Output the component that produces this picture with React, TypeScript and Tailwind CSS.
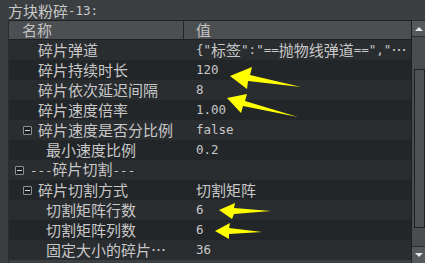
import React from "react";

type Row = {
  level: 0 | 1 | 2;
  name: string;
  value: string;
  toggle?: boolean;
};

const ROWS: Row[] = [
  { level: 1, name: "碎片弹道", value: '{"标签":"==抛物线弹道==","…' },
  { level: 1, name: "碎片持续时长", value: "120" },
  { level: 1, name: "碎片依次延迟间隔", value: "8" },
  { level: 1, name: "碎片速度倍率", value: "1.00" },
  { level: 1, name: "碎片速度是否分比例", value: "false", toggle: true },
  { level: 2, name: "最小速度比例", value: "0.2" },
  { level: 0, name: "---碎片切割---", value: "", toggle: true },
  { level: 1, name: "碎片切割方式", value: "切割矩阵", toggle: true },
  { level: 2, name: "切割矩阵行数", value: "6" },
  { level: 2, name: "切割矩阵列数", value: "6" },
  { level: 2, name: "固定大小的碎片…", value: "36" },
];

const INDENT = ["pl-[6px]", "pl-[14px]", "pl-[22px]"];

// CJK runs get the wide font, everything else the mono one
function Mixed({ text }: { text: string }) {
  const parts = text.split(/([\u2026\u3000-\u9fff\uff00-\uffef]+)/).filter(Boolean);
  return (
    <>
      {parts.map((part, i) =>
        /[\u2026\u3000-\u9fff\uff00-\uffef]/.test(part) ? (
          <span key={i} className="font-['Noto_Sans_CJK_SC',sans-serif] text-[15px]">
            {part}
          </span>
        ) : (
          <span key={i} className="font-['DejaVu_Sans_Mono',monospace] text-[12.5px]">
            {part}
          </span>
        ),
      )}
    </>
  );
}

function Toggle() {
  return (
    <span className="flex h-[9px] w-[9px] items-center justify-center rounded-[1px] border border-[#8d9094] bg-[#1d1f21]">
      <span className="h-px w-[5px] bg-[#d8d8d8]" />
    </span>
  );
}

function Arrows() {
  return (
    <svg
      width="425"
      height="263"
      viewBox="0 0 425 263"
      className="pointer-events-none absolute left-0 top-0"
      aria-hidden
    >
      <g fill="#ffff00">
        <polygon points="230,76 252,67 250,75 301,87 248,81 247,89" />
        <polygon points="227,98 247,94 245,101 298,117 243,106 241,113" />
        <polygon points="219,210 235,203 234,208 271,211 234,214 232,219" />
        <polygon points="215,231 230,223 229,228 262,232 229,234 229,239" />
      </g>
    </svg>
  );
}

export default function App() {
  return (
    <div className="relative h-[263px] w-[425px] overflow-hidden bg-[#3c3f41] text-[#c8c8c8]">
      <div className="flex h-[20px] items-center pl-[8px] pt-[2px] leading-[20px] text-[#c9c9c9]">
        <Mixed text="方块粉碎-13:" />
      </div>

      <div className="ml-[8px] flex h-[243px] border-l border-[#2a2c2e]">
        <div className="flex w-[402px] flex-col">
          {/* header */}
          <div className="flex h-[20px] border-b border-t border-[#1e2022] bg-[#4b4f52] leading-[18px] text-[#c3c3c3]">
            <div className="flex w-[175px] items-center border-r border-[#232527] pl-[13px]">
              <Mixed text="名称" />
            </div>
            <div className="flex items-center pl-[12px]">
              <Mixed text="值" />
            </div>
          </div>

          {ROWS.map((row, i) => (
            <div
              key={row.name}
              className={`flex h-[20px] shrink-0 leading-[20px] ${
                i % 2 === 0 ? "bg-[#2a2d30]" : "bg-[#232629]"
              }`}
            >
              <div className={`flex w-[175px] items-center ${INDENT[row.level]}`}>
                <span className="flex w-[15px] shrink-0 items-center">{row.toggle && <Toggle />}</span>
                <span className="whitespace-nowrap">
                  <Mixed text={row.name} />
                </span>
              </div>
              <div className="flex items-center overflow-hidden whitespace-nowrap pl-[12px]">
                <Mixed text={row.value} />
              </div>
            </div>
          ))}
        </div>

        {/* scrollbar */}
        <div className="flex w-[14px] flex-col border-l border-[#1e2022] bg-[#4a4d50]">
          <div className="flex h-[17px] items-center justify-center border-b border-t border-[#2a2c2e] bg-[#55595c]">
            <span className="h-0 w-0 border-x-[4px] border-b-[4px] border-x-transparent border-b-[#e8e8e8]" />
          </div>
          <div className="flex flex-1 flex-col pl-[2px] pt-[32px] pb-[18px]">
            <div className="flex-1 border border-[#1e2022] bg-[#4e5255]" />
          </div>
          <div className="flex h-[17px] items-center justify-center border-t border-[#2a2c2e] bg-[#55595c]">
            <span className="h-0 w-0 border-x-[4px] border-t-[4px] border-x-transparent border-t-[#e8e8e8]" />
          </div>
        </div>
      </div>

      <Arrows />
    </div>
  );
}
